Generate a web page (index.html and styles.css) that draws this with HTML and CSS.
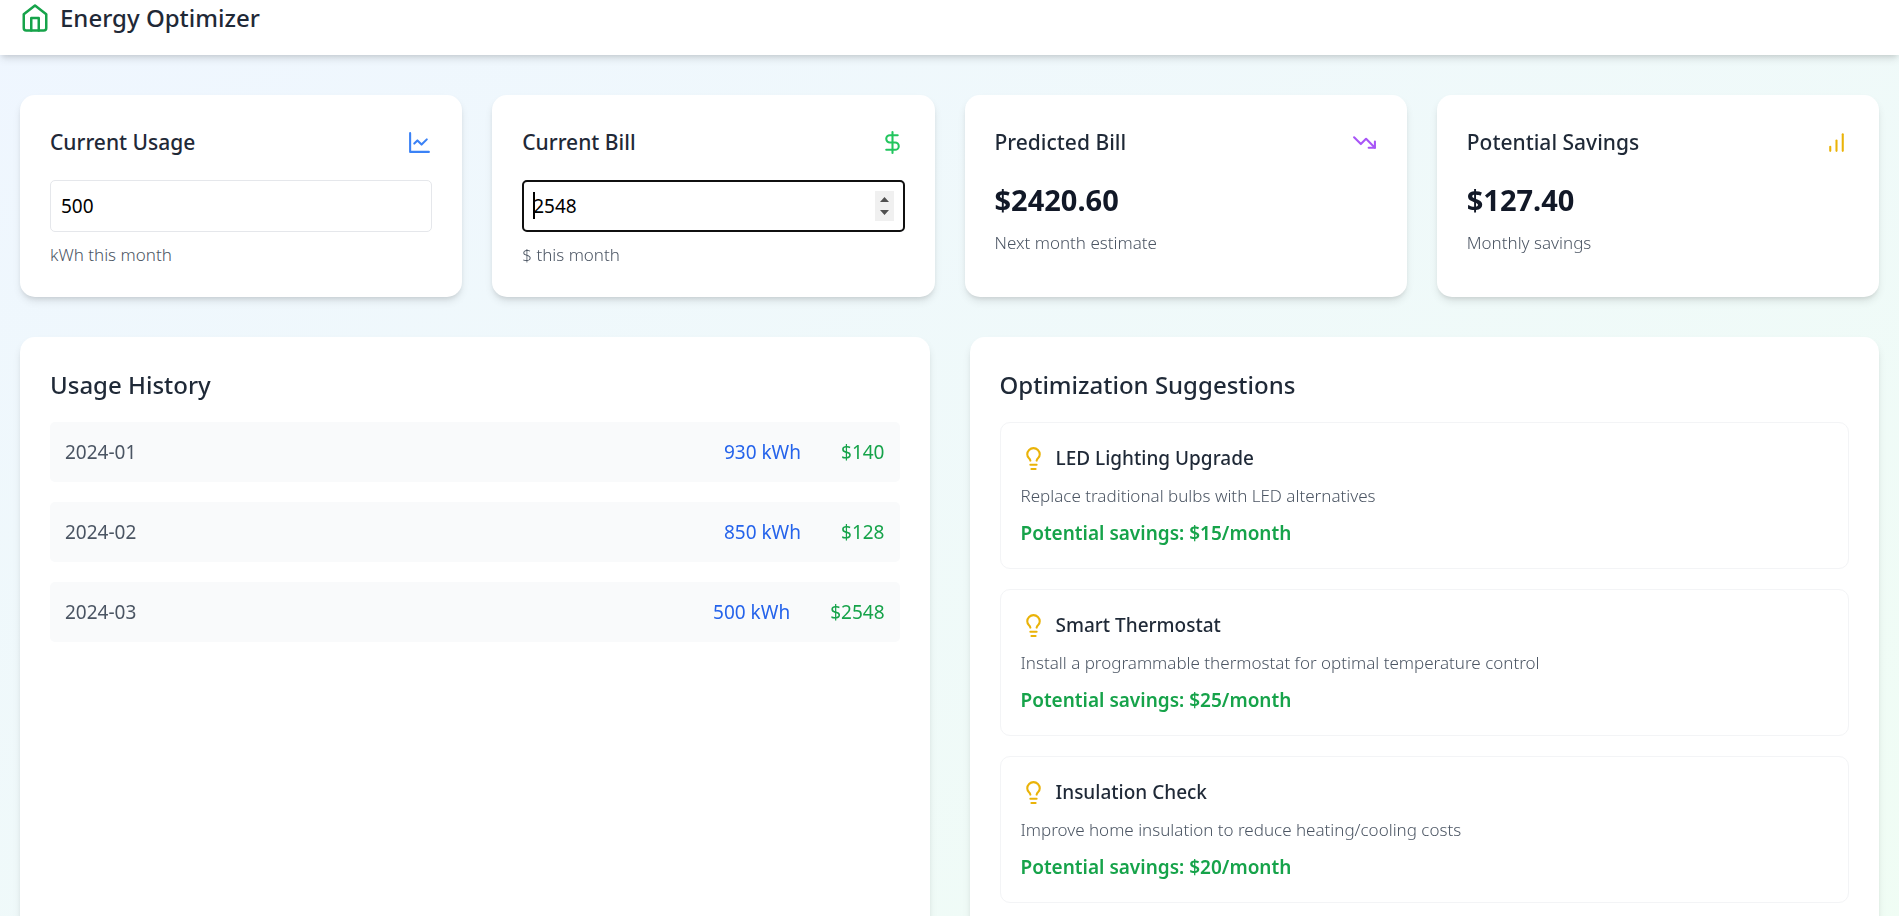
FILE: index.html
```html
<!DOCTYPE html>
<html lang="en">
<head>
<meta charset="utf-8">
<meta name="viewport" content="width=device-width, initial-scale=1">
<title>Energy Optimizer</title>
<link rel="stylesheet" href="styles.css">
</head>
<body>
<svg class="sprite" aria-hidden="true">
  <symbol id="bulb" viewBox="0 0 24 24">
    <path d="M15 14c.2-1 .7-1.7 1.5-2.5 1-.9 1.5-2.2 1.5-3.5A6 6 0 0 0 6 8c0 1 .2 2.2 1.5 3.5.7.7 1.3 1.5 1.5 2.5"/>
    <path d="M9 18h6"/>
    <path d="M10 22h4"/>
  </symbol>
</svg>
<header class="topbar">
  <svg class="icon icon-logo" viewBox="0 0 24 24" aria-hidden="true"><path d="m3 9 9-7 9 7v11a2 2 0 0 1-2 2H5a2 2 0 0 1-2-2z"/><path d="M9 22V12h6v10"/></svg>
  <h1 class="brand">Energy Optimizer</h1>
</header>
<main class="page">
  <section class="stats" aria-label="Summary">
    <div class="card">
      <div class="card-head">
        <label class="card-title" for="usage">Current Usage</label>
        <svg class="icon blue" viewBox="0 0 24 24" aria-hidden="true"><path d="M3 3v18h18"/><path d="m19 9-5 5-4-4-3 3"/></svg>
      </div>
      <input class="field" id="usage" type="number" value="500">
      <p class="caption">kWh this month</p>
    </div>
    <div class="card">
      <div class="card-head">
        <label class="card-title" for="bill">Current Bill</label>
        <svg class="icon green" viewBox="0 0 24 24" aria-hidden="true"><path d="M12 2v20"/><path d="M17 5H9.5a3.5 3.5 0 0 0 0 7h5a3.5 3.5 0 0 1 0 7H6"/></svg>
      </div>
      <input class="field" id="bill" type="number" value="2548" autofocus>
      <p class="caption">$ this month</p>
    </div>
    <div class="card">
      <div class="card-head">
        <h2 class="card-title">Predicted Bill</h2>
        <svg class="icon purple" viewBox="0 0 24 24" aria-hidden="true"><path d="m22 17-8.500-8.500-5 5L2 7"/><path d="M16 17h6v-6"/></svg>
      </div>
      <p class="figure">$2420.60</p>
      <p class="caption">Next month estimate</p>
    </div>
    <div class="card">
      <div class="card-head">
        <h2 class="card-title">Potential Savings</h2>
        <svg class="icon yellow" viewBox="0 0 24 24" aria-hidden="true"><path d="M12 20V10"/><path d="M18 20V4"/><path d="M6 20v-4"/></svg>
      </div>
      <p class="figure">$127.40</p>
      <p class="caption">Monthly savings</p>
    </div>
  </section>
  <div class="panels">
    <section class="card">
      <h2 class="panel-title">Usage History</h2>
      <ul class="list">
        <li class="entry"><span>2024-01</span><span class="amounts"><span class="kwh">930 kWh</span><span class="cost">$140</span></span></li>
        <li class="entry"><span>2024-02</span><span class="amounts"><span class="kwh">850 kWh</span><span class="cost">$128</span></span></li>
        <li class="entry"><span>2024-03</span><span class="amounts"><span class="kwh">500 kWh</span><span class="cost">$2548</span></span></li>
      </ul>
    </section>
    <section class="card">
      <h2 class="panel-title">Optimization Suggestions</h2>
      <ul class="list">
        <li class="tip">
          <h3 class="tip-title"><svg class="icon yellow" aria-hidden="true"><use href="#bulb"/></svg>LED Lighting Upgrade</h3>
          <p class="caption">Replace traditional bulbs with LED alternatives</p>
          <p class="saving">Potential savings: $15/month</p>
        </li>
        <li class="tip">
          <h3 class="tip-title"><svg class="icon yellow" aria-hidden="true"><use href="#bulb"/></svg>Smart Thermostat</h3>
          <p class="caption">Install a programmable thermostat for optimal temperature control</p>
          <p class="saving">Potential savings: $25/month</p>
        </li>
        <li class="tip">
          <h3 class="tip-title"><svg class="icon yellow" aria-hidden="true"><use href="#bulb"/></svg>Insulation Check</h3>
          <p class="caption">Improve home insulation to reduce heating/cooling costs</p>
          <p class="saving">Potential savings: $20/month</p>
        </li>
      </ul>
    </section>
  </div>
</main>
</body>
</html>
```
FILE: styles.css
```css
* { box-sizing: border-box; }
h1, h2, h3, p, ul { margin: 0; padding: 0; }
ul { list-style: none; }

body {
  margin: 0;
  min-height: 100vh;
  font-family: "Segoe UI", "Noto Sans", "Open Sans", sans-serif;
  font-size: 19px;
  line-height: 30px;
  color: #1f2937;
  background: linear-gradient(to bottom right, #eff6ff, #f0fdf4);
}

.sprite { display: none; }

.icon {
  width: 25px;
  height: 25px;
  flex: none;
  fill: none;
  stroke: currentColor;
  stroke-width: 2;
  stroke-linecap: round;
  stroke-linejoin: round;
}
.icon-logo { width: 30px; height: 30px; color: #16a34a; }
.blue { color: #3b82f6; }
.green { color: #22c55e; }
.purple { color: #a855f7; }
.yellow { color: #eab308; }

.topbar {
  display: flex;
  align-items: center;
  gap: 10px;
  padding: 0 20px 20px;
  background: #fff;
  box-shadow: 0 5px 8px -1px rgba(0, 0, 0, 0.1), 0 3px 5px -2px rgba(0, 0, 0, 0.1);
}
.brand { font-size: 24px; line-height: 35px; font-weight: 500; }

.page { padding: 40px 20px; }

.stats {
  display: grid;
  grid-template-columns: repeat(4, 1fr);
  gap: 30px;
  margin-bottom: 40px;
}
.panels {
  display: grid;
  grid-template-columns: repeat(2, 1fr);
  gap: 40px;
}

.card {
  padding: 30px;
  border-radius: 15px;
  background: #fff;
  box-shadow: 0 5px 8px -1px rgba(0, 0, 0, 0.1), 0 3px 5px -2px rgba(0, 0, 0, 0.1);
}
.card-head {
  display: flex;
  align-items: center;
  justify-content: space-between;
  margin-bottom: 20px;
}
.card-title { font-size: 21px; line-height: 35px; font-weight: 500; }

.field {
  display: block;
  width: 100%;
  height: 52px;
  padding: 10px;
  border: 1px solid #e5e7eb;
  border-radius: 5px;
  font: inherit;
  color: #000;
  background: #fff;
}
.field:focus {
  outline: 2px solid #101010;
  outline-offset: -2px;
  caret-color: transparent;
  background: linear-gradient(#000, #000) 10px 11px / 2px 27px no-repeat #fff;
}
.field::-webkit-inner-spin-button {
  appearance: none;
  width: 19px;
  height: 30px;
  opacity: 0;
  background: #f0f0f0 url("data:image/svg+xml,%3Csvg xmlns='http://www.w3.org/2000/svg' viewBox='0 0 19 30'%3E%3Cpath fill='%23505050' d='M5 11h9L9.500 6zM5 19h9l-4.500 5z'/%3E%3C/svg%3E") center / 19px 30px no-repeat;
}
.field:focus::-webkit-inner-spin-button { opacity: 1; }

.caption {
  margin-top: 10px;
  font-size: 17px;
  line-height: 25px;
  font-weight: 300;
  color: #4b5563;
}
.figure { font-size: 29px; line-height: 40px; font-weight: 700; color: #111827; }

.panel-title { margin-bottom: 20px; font-size: 24px; line-height: 35px; font-weight: 500; }
.list { display: grid; gap: 20px; }

.entry {
  display: flex;
  justify-content: space-between;
  padding: 15px;
  border-radius: 5px;
  background: #f9fafb;
  color: #4b5563;
}
.amounts { display: flex; gap: 40px; }
.kwh { color: #2563eb; }
.cost { color: #16a34a; }

.tip { padding: 20px; border: 1px solid #f3f4f6; border-radius: 10px; }
.tip-title { display: flex; align-items: center; gap: 10px; font-size: 19px; line-height: 30px; font-weight: 500; }
.saving { margin-top: 10px; font-weight: 600; color: #16a34a; }

@media (max-width: 1000px) {
  .stats { grid-template-columns: repeat(2, 1fr); }
  .panels { grid-template-columns: 1fr; }
}
```
